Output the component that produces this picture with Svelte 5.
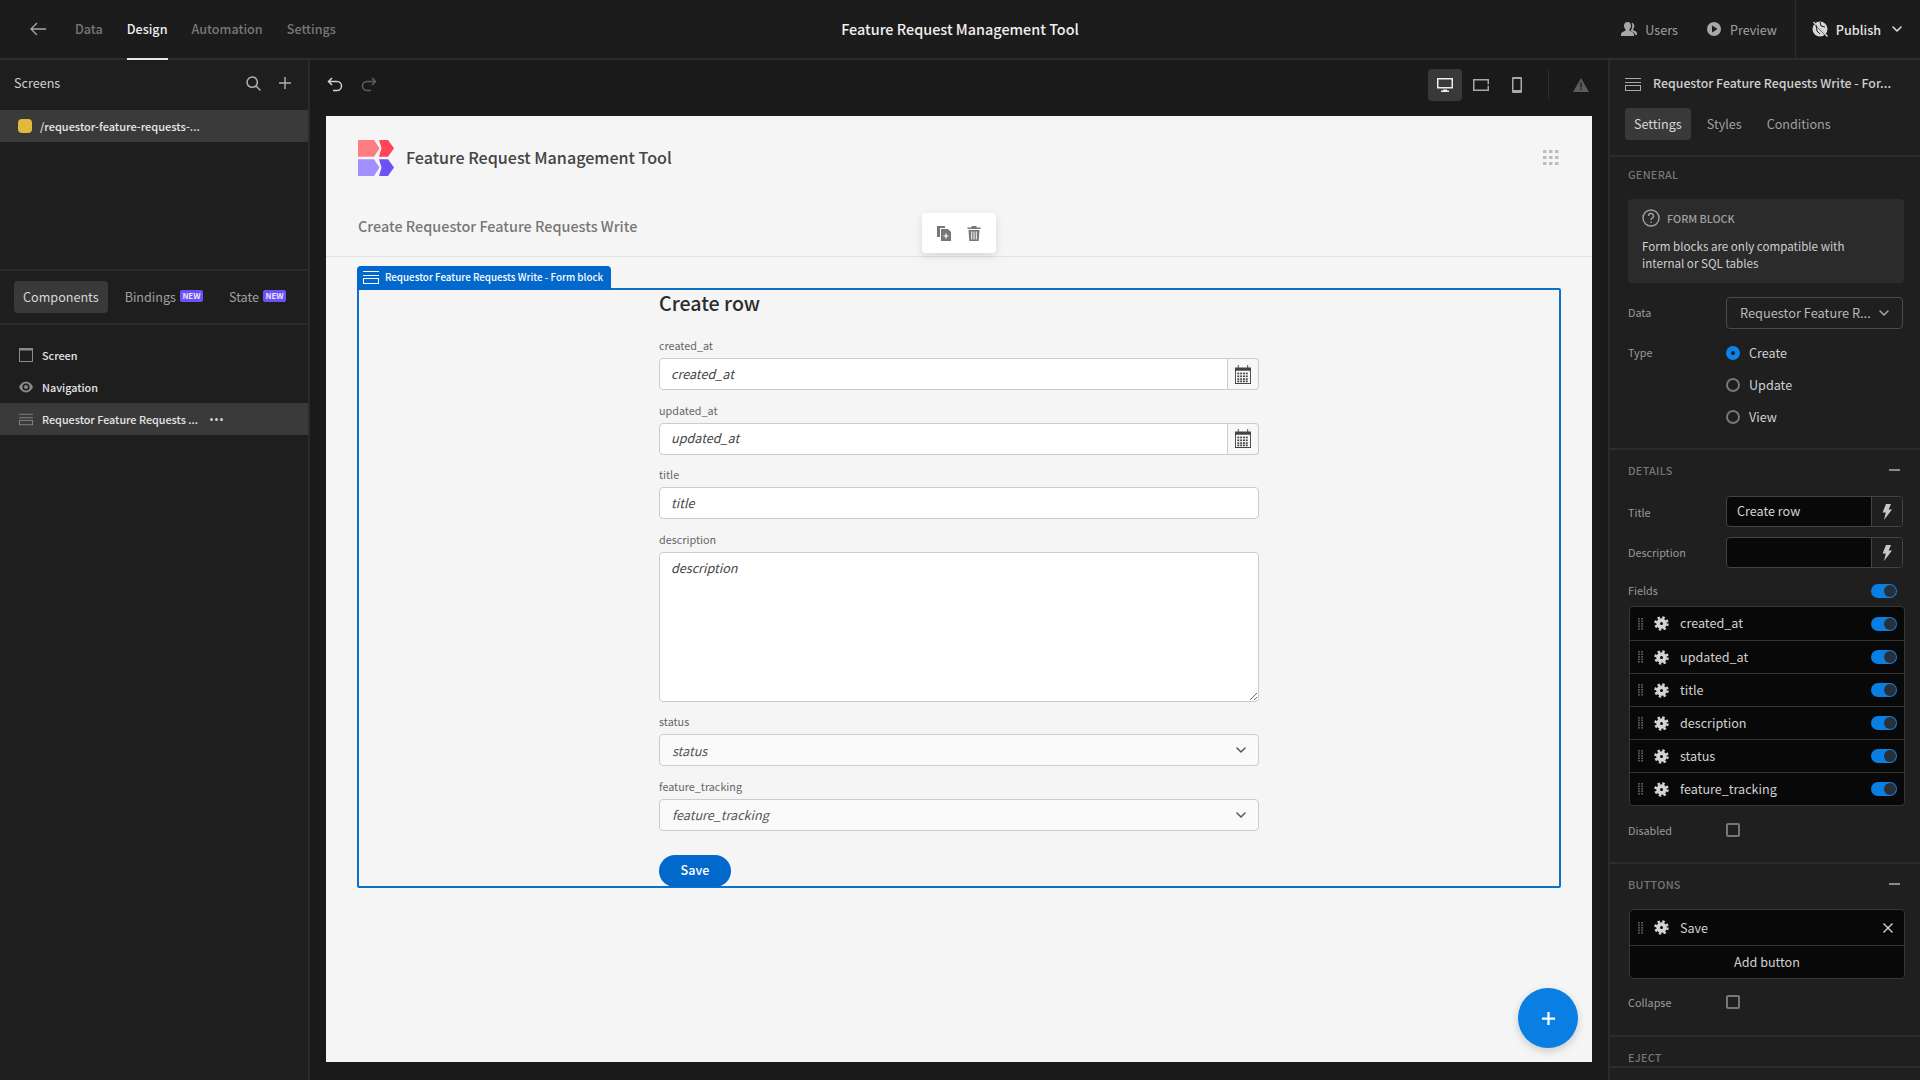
<script>
  const navItems = ['Data', 'Design', 'Automation', 'Settings'];
  const fields = ['created_at', 'updated_at', 'title', 'description', 'status', 'feature_tracking'];
</script>

{#snippet formIcon()}
  <svg class="form-icon" viewBox="0 0 16 13" fill="none" stroke="currentColor" stroke-width="1">
    <path d="M0 .5h16M0 4.5h16" />
    <rect x=".5" y="7.5" width="15" height="5" />
  </svg>
{/snippet}

{#snippet gear()}
  <svg class="gear" viewBox="0 0 16 16">
    <circle cx="8" cy="8" r="5.6" fill="#d4d4d4" />
    <circle cx="8" cy="8" r="6.4" fill="none" stroke="#d4d4d4" stroke-width="2.6" stroke-dasharray="2.6 2.43" />
    <circle cx="8" cy="8" r="1.6" fill="#0a0a0a" />
  </svg>
{/snippet}

{#snippet grip()}
  <svg class="grip" viewBox="0 0 5 12" fill="#5c5c5c">
    {#each [0, 2.5, 5, 7.5, 10] as y}
      <rect x="0" {y} width="1.8" height="1.6" />
      <rect x="3.2" {y} width="1.8" height="1.6" />
    {/each}
  </svg>
{/snippet}

{#snippet chevron()}
  <svg class="chevron" viewBox="0 0 10 6" fill="none" stroke="currentColor" stroke-width="1.5" stroke-linecap="round" stroke-linejoin="round">
    <path d="M1 1l4 4 4-4" />
  </svg>
{/snippet}

{#snippet bolt()}
  <svg class="bolt" viewBox="0 0 10 16" fill="#c8c8c8">
    <path d="M4 0h5L6.6 5.5H10L2 16l1.8-7.6H.6z" />
  </svg>
{/snippet}

{#snippet calendar()}
  <svg class="cal" viewBox="0 0 17 20" fill="#444">
    <path d="M0 2.5h3V0h1v2.5h9V0h1v2.5h3V20H0zM1 6v13h15V6z" />
    {#each [8, 11, 14, 16.4] as y}
      {#each [2.5, 5.5, 8.5, 11.5] as x}
        <rect {x} {y} width="2" height="1.8" />
      {/each}
    {/each}
  </svg>
{/snippet}

<div class="app">
  <header class="topbar">
    <button class="back" aria-label="Back">
      <svg viewBox="0 0 16 14" fill="none" stroke="currentColor" stroke-width="1.3">
        <path d="M16 7H1M7 1L1 7l6 6" />
      </svg>
    </button>
    <nav class="main-nav">
      {#each navItems as item}
        <span class="nav-item" class:active={item === 'Design'}>{item}</span>
      {/each}
    </nav>
    <div class="app-name">Feature Request Management Tool</div>
    <div class="top-actions">
      <span class="top-link users">
        <svg viewBox="0 0 16 14" fill="#a8a8a8">
          <path d="M6.5 0C8.6 0 10 1.6 10 3.8c0 1.5-.6 2.7-1.5 3.5v1.2c0 .5 4.5 1.4 4.5 4V14H0v-1.5c0-2.6 4.5-3.5 4.5-4V7.3C3.600 6.500 3 5.300 3 3.800 3 1.600 4.400 0 6.500 0z" />
          <path d="M10.500.6c1.700.3 2.800 1.700 2.800 3.400 0 1.200-.4 2.200-1.200 3v1c.6.4 3.900 1.200 3.900 3.500V13h-1.700c-.3-2.400-2.600-3.300-4.400-4.100V7.800c.9-.9 1.400-2.300 1.400-3.900 0-1.200-.3-2.400-.8-3.300z" />
        </svg>
        Users
      </span>
      <span class="top-link preview">
        <svg viewBox="0 0 14 14">
          <circle cx="7" cy="7" r="7" fill="#a8a8a8" />
          <path d="M5 3.600L10.500 7 5 10.400z" fill="#1c1c1c" />
        </svg>
        Preview
      </span>
      <div class="publish">
        <svg viewBox="0 0 16 16" fill="#d8d8d8">
          <circle cx="8" cy="8" r="7.5" />
          <path d="M1 0l15 15.500-1 1L0 1z" fill="#1c1c1c" />
          <path d="M2 .5l14 14.500-1 1L1 1.500z" />
          <path d="M4 4l1 6 3 3M8 1l1 4 4 1" fill="none" stroke="#1c1c1c" />
        </svg>
        <span>Publish</span>
        {@render chevron()}
      </div>
    </div>
  </header>

  <div class="workspace">
    <aside class="left-panel">
      <div class="screens-head">
        <span class="nudge">Screens</span>
        <div class="head-icons">
          <svg viewBox="0 0 14 14" fill="none" stroke="currentColor" stroke-width="1.4">
            <circle cx="5.8" cy="5.8" r="4.8" />
            <path d="M9.300 9.300l4.200 4.200" />
          </svg>
          <svg viewBox="0 0 12 12" fill="none" stroke="currentColor" stroke-width="1.4">
            <path d="M6 0v12M0 6h12" />
          </svg>
        </div>
      </div>
      <div class="screen-row">
        <span class="swatch"></span>
        <span>/requestor-feature-requests-...</span>
      </div>

      <div class="left-lower">
        <div class="left-tabs">
          <span class="tab selected">Components</span>
          <span class="tab">Bindings <em class="new">NEW</em></span>
          <span class="tab">State <em class="new">NEW</em></span>
        </div>
        <ul class="tree">
          <li>
            <svg class="tree-icon" viewBox="0 0 14 14" fill="none" stroke="#8a8a8a">
              <rect x=".5" y=".5" width="13" height="13" />
              <path d="M0 1.500h14" stroke-width="2" />
            </svg>
            Screen
          </li>
          <li>
            <svg class="tree-icon" viewBox="0 0 14 12">
              <path d="M0 6c1.500-3.400 4-5.500 7-5.500S12.500 2.600 14 6c-1.500 3.400-4 5.500-7 5.500S1.500 9.400 0 6z" fill="#8a8a8a" />
              <circle cx="7" cy="6" r="3.600" fill="#1e1e1e" />
              <circle cx="7" cy="6" r="2" fill="#8a8a8a" />
            </svg>
            Navigation
          </li>
          <li class="selected">
            <span class="tree-form">{@render formIcon()}</span>
            Requestor Feature Requests ...
            <span class="more"><i></i><i></i><i></i></span>
          </li>
        </ul>
      </div>
    </aside>

    <main class="center">
      <div class="toolbar">
        <div class="history">
          <svg viewBox="0 0 16 16" fill="none" stroke="#d0d0d0" stroke-width="1.5">
            <path d="M5 1L1.500 4.500 5 8M2 4.500h8a4.500 4.500 0 0 1 0 9H6" />
          </svg>
          <svg viewBox="0 0 16 16" fill="none" stroke="#5e5e5e" stroke-width="1.5">
            <path d="M11 1l3.500 3.500L11 8M14 4.500H6a4.500 4.500 0 0 0 0 9h4" />
          </svg>
        </div>
        <div class="devices">
          <span class="device on">
            <svg viewBox="0 0 16 14" fill="#eee">
              <path d="M0 0h16v10.500H0zM1.500 1.500V9h13V1.500zM6 11.500h4v1h2V14H4v-1.500h2z" />
            </svg>
          </span>
          <span class="device">
            <svg viewBox="0 0 16 12" fill="#a8a8a8">
              <path d="M0 0h16v12H0zM1.500 1.500v9h13v-9z" />
              <circle cx="15" cy="6" r="1" fill="#1a1a1a" />
            </svg>
          </span>
          <span class="device">
            <svg class="phone" viewBox="0 0 10 16" fill="#a8a8a8">
              <path d="M1 0h8a1 1 0 0 1 1 1v14a1 1 0 0 1-1 1H1a1 1 0 0 1-1-1V1a1 1 0 0 1 1-1zM1.500 2v11h7V2z" />
            </svg>
          </span>
          <span class="tool-sep"></span>
          <svg class="warn" viewBox="0 0 16 14">
            <path d="M8 0l8 14H0z" fill="#5c5c5c" />
            <path d="M7.300 4.500h1.400v5H7.300zM7.300 10.500h1.400v1.400H7.300z" fill="#1a1a1a" />
          </svg>
        </div>
      </div>

      <div class="canvas">
        <div class="site-nav">
          <div class="brand">
            <svg class="logo" viewBox="0 0 36 36">
              <path d="M0 0h16l5.500 8.300-5.500 8.400H0z" fill="#ff7c80" />
              <path d="M21 0h9l6 8.300-6 8.400h-9l2.500-8.400z" fill="#ff4557" />
              <path d="M0 19.300h16l5.500 8.300-5.500 8.400H0z" fill="#a48fff" />
              <path d="M21 19.300h9l6 8.300-6 8.400h-9l2.500-8.400z" fill="#6a52f5" />
            </svg>
            <span class="nudge">Feature Request Management Tool</span>
          </div>
          <svg class="dots" viewBox="0 0 16 15" fill="#bdbdbd">
            {#each [0, 6, 12] as y}
              {#each [0, 6, 12] as x}
                <rect {x} {y} width="3.5" height="3" />
              {/each}
            {/each}
          </svg>
        </div>
        <h2 class="screen-title">Create Requestor Feature Requests Write</h2>

        <div class="float-tools">
          <svg viewBox="0 0 14 15" fill="#777">
            <path d="M0 0h8v2H3v9H0z" />
            <path d="M4 3h7l3 3v9H4z" />
            <path d="M9 7.500v5M6.500 10h5" stroke="#fff" stroke-width="1.2" />
          </svg>
          <svg viewBox="0 0 13 15" fill="#777">
            <path d="M0 1.500h4V0h5v1.500h4V3H0z" />
            <path d="M1 4h11l-.8 11H1.800zM3.700 5.500v8h1v-8zM6 5.500v8h1v-8zM8.300 5.500v8h1v-8z" fill-rule="evenodd" />
          </svg>
        </div>

        <section class="block">
          <div class="block-tag">
            {@render formIcon()}
            <span>Requestor Feature Requests Write - Form block</span>
          </div>
          <form class="form" on:submit|preventDefault>
            <h3>Create row</h3>
            <div class="field">
              <label for="created">created_at</label>
              <div class="date-input">
                <input id="created" placeholder="created_at" />
                <span class="cal-btn">{@render calendar()}</span>
              </div>
            </div>
            <div class="field">
              <label for="updated">updated_at</label>
              <div class="date-input">
                <input id="updated" placeholder="updated_at" />
                <span class="cal-btn">{@render calendar()}</span>
              </div>
            </div>
            <div class="field">
              <label for="title">title</label>
              <input id="title" class="plain" placeholder="title" />
            </div>
            <div class="field">
              <label for="desc">description</label>
              <textarea id="desc" placeholder="description"></textarea>
            </div>
            <div class="field">
              <span class="label">status</span>
              <div class="picker"><i>status</i>{@render chevron()}</div>
            </div>
            <div class="field">
              <span class="label">feature_tracking</span>
              <div class="picker"><i>feature_tracking</i>{@render chevron()}</div>
            </div>
            <button class="save" type="button">Save</button>
          </form>
        </section>

        <button class="fab" aria-label="Add component">
          <svg viewBox="0 0 16 16" fill="none" stroke="#fff" stroke-width="2.4">
            <path d="M8 1v14M1 8h14" />
          </svg>
        </button>
      </div>
    </main>

    <aside class="right-panel">
      <div class="settings-head">
        <div class="settings-title">
          {@render formIcon()}
          <span class="nudge">Requestor Feature Requests Write - For...</span>
        </div>
        <div class="settings-tabs">
          <span class="tab selected">Settings</span>
          <span class="tab">Styles</span>
          <span class="tab">Conditions</span>
        </div>
      </div>

      <section class="group general">
        <h4>GENERAL</h4>
        <div class="info">
          <div class="info-head">
            <svg viewBox="0 0 18 18" fill="none" stroke="#a0a0a0" stroke-width="1.4">
              <circle cx="9" cy="9" r="8" />
              <path d="M6.500 7a2.500 2.500 0 1 1 3.600 2.200c-.8.4-1.100.9-1.100 1.800" />
              <path d="M9 12.500v1.500" />
            </svg>
            FORM BLOCK
          </div>
          <p>Form blocks are only compatible with internal or SQL tables</p>
        </div>
        <div class="prop data-row">
          <span class="prop-label nudge">Data</span>
          <div class="data-select"><span class="nudge">Requestor Feature R...</span>{@render chevron()}</div>
        </div>
        <div class="prop type-row">
          <span class="prop-label">Type</span>
          <div class="radios">
            <span class="radio on"><span class="nudge">Create</span></span>
            <span class="radio"><span class="nudge">Update</span></span>
            <span class="radio"><span class="nudge">View</span></span>
          </div>
        </div>
      </section>

      <section class="group details">
        <h4>DETAILS <b class="minus"></b></h4>
        <div class="prop title-row">
          <span class="prop-label">Title</span>
          <div class="bound"><span>Create row</span><em>{@render bolt()}</em></div>
        </div>
        <div class="prop desc-row">
          <span class="prop-label nudge">Description</span>
          <div class="bound"><span></span><em>{@render bolt()}</em></div>
        </div>
        <div class="prop fields-row">
          <span class="prop-label nudge">Fields</span>
          <span class="toggle"></span>
        </div>
        <ul class="list">
          {#each fields as field}
            <li>
              {@render grip()}
              {@render gear()}
              <span class="nudge">{field}</span>
              <span class="toggle"></span>
            </li>
          {/each}
        </ul>
        <div class="prop check-row">
          <span class="prop-label">Disabled</span>
          <span class="check"></span>
        </div>
      </section>

      <section class="group buttons">
        <h4>BUTTONS <b class="minus"></b></h4>
        <ul class="list">
          <li class="tall">
            {@render grip()}
            {@render gear()}
            <span>Save</span>
            <svg class="close" viewBox="0 0 10 10" fill="none" stroke="#d4d4d4" stroke-width="1.4">
              <path d="M.5.5l9 9M9.500.5l-9 9" />
            </svg>
          </li>
          <li class="add"><span class="nudge">Add button</span></li>
        </ul>
        <div class="prop check-row collapse">
          <span class="prop-label">Collapse</span>
          <span class="check"></span>
        </div>
      </section>

      <section class="group eject">
        <h4>EJECT</h4>
      </section>
    </aside>
  </div>
</div>

<style>
  :global(body) {
    margin: 0;
    background: #1a1a1a;
    overflow: hidden;
  }

  .app {
    width: 1920px;
    height: 1080px;
    display: flex;
    flex-direction: column;
    overflow: hidden;
    font-family: 'Noto Sans CJK SC', 'Noto Sans', sans-serif;
    color: #d0d0d0;
    font-size: 12.6px;
  }

  /* this font sits a pixel low in centered rows */
  .nudge {
    margin-bottom: 2px;
  }

  /* top bar */
  .topbar {
    position: relative;
    height: 58px;
    flex: none;
    display: flex;
    align-items: center;
    background: #1c1c1c;
    border-bottom: 2px solid #2c2c2c;
  }

  .back {
    width: 16px;
    height: 14px;
    margin-left: 30px;
    padding: 0;
    border: 0;
    background: none;
    color: #a8a8a8;
  }

  .back svg {
    display: block;
  }

  .main-nav {
    display: flex;
    gap: 24px;
    margin-left: 29px;
    height: 100%;
  }

  .nav-item {
    position: relative;
    line-height: 58px;
    font-weight: 500;
    color: #777;
  }

  .nav-item.active {
    color: #eee;
  }

  .nav-item.active::after {
    content: '';
    position: absolute;
    left: 0;
    right: 0;
    bottom: -2px;
    height: 2px;
    background: #e8e8e8;
  }

  .app-name {
    position: absolute;
    left: 0;
    right: 0;
    padding-bottom: 2px;
    text-align: center;
    font-size: 14.4px;
    font-weight: 500;
    color: #f0f0f0;
    pointer-events: none;
  }

  .top-actions {
    margin-left: auto;
    height: 100%;
    display: flex;
    align-items: center;
  }

  .top-link {
    display: flex;
    align-items: center;
    color: #a0a0a0;
  }

  .users svg {
    width: 16px;
    height: 14px;
    margin-right: 8px;
  }

  .preview {
    margin-left: 29px;
  }

  .preview svg {
    width: 14px;
    height: 14px;
    margin-right: 9px;
  }

  .publish {
    height: 100%;
    margin-left: 18px;
    padding: 0 18px 0 16px;
    display: flex;
    align-items: center;
    border-left: 1px solid #2c2c2c;
    color: #e4e4e4;
    font-weight: 500;
  }

  .publish svg:first-child {
    width: 16px;
    height: 16px;
    margin-right: 8px;
  }

  .publish :global(.chevron) {
    margin-left: 11px;
  }

  .chevron {
    width: 10px;
    height: 6px;
    flex: none;
  }

  /* layout */
  .workspace {
    flex: 1;
    min-height: 0;
    display: flex;
  }

  .left-panel {
    width: 308px;
    flex: none;
    display: flex;
    flex-direction: column;
    background: #1e1e1e;
    border-right: 2px solid #2a2a2a;
  }

  .screens-head {
    box-sizing: border-box;
    height: 50px;
    padding: 0 17px 4px 14px;
    display: flex;
    align-items: center;
    justify-content: space-between;
    color: #cfcfcf;
  }

  .head-icons {
    display: flex;
    align-items: center;
    gap: 18px;
    color: #b0b0b0;
  }

  .head-icons svg:first-child {
    width: 15px;
    height: 15px;
  }

  .head-icons svg:last-child {
    width: 12px;
    height: 12px;
  }

  .screen-row {
    height: 32px;
    padding-left: 18px;
    display: flex;
    align-items: center;
    gap: 8px;
    background: #3a3a3a;
    color: #e8e8e8;
    font-size: 11px;
    font-weight: 500;
  }

  .swatch {
    width: 14px;
    height: 14px;
    border-radius: 4px;
    background: #e0b93d;
  }

  .left-lower {
    margin-top: 127px;
    border-top: 2px solid #2a2a2a;
  }

  .left-tabs {
    height: 52px;
    padding: 0 14px;
    display: flex;
    align-items: center;
    gap: 8px;
    border-bottom: 2px solid #2a2a2a;
  }

  .tab {
    box-sizing: border-box;
    display: inline-flex;
    align-items: center;
    height: 32px;
    padding: 0 9px 2px;
    color: #a0a0a0;
    white-space: nowrap;
  }

  .tab.selected {
    border-radius: 4px;
    background: #393939;
    color: #d8d8d8;
  }

  .new {
    margin-left: 4px;
    width: 23px;
    height: 12px;
    border-radius: 2px;
    background: #6a52f5;
    color: #e8e4ff;
    font-size: 8px;
    font-style: normal;
    font-weight: 700;
    line-height: 12px;
    text-align: center;
  }

  .tree {
    list-style: none;
    margin: 0;
    padding: 14px 0 0;
  }

  .tree li {
    height: 32px;
    padding-left: 19px;
    display: flex;
    align-items: center;
    color: #e4e4e4;
    font-size: 10.8px;
    font-weight: 500;
  }

  .tree li.selected {
    background: #3a3a3a;
  }

  .tree-icon {
    width: 14px;
    height: 14px;
    margin-right: 9px;
    flex: none;
  }

  .tree-form {
    display: flex;
    margin-right: 9px;
    color: #8a8a8a;
  }

  .tree-form :global(.form-icon) {
    width: 14px;
    height: 13px;
  }

  .more {
    display: flex;
    gap: 2px;
    margin-left: 12px;
  }

  .more i {
    width: 3px;
    height: 3px;
    border-radius: 50%;
    background: #d0d0d0;
  }

  /* center */
  .center {
    flex: 1;
    min-width: 0;
    display: flex;
    flex-direction: column;
    background: #1a1a1a;
    padding: 0 16px 18px;
  }

  .toolbar {
    box-sizing: border-box;
    height: 56px;
    padding-bottom: 6px;
    flex: none;
    display: flex;
    align-items: center;
    justify-content: space-between;
  }

  .history {
    display: flex;
    gap: 18px;
    padding-left: 1px;
  }

  .history svg {
    width: 16px;
    height: 16px;
  }

  .devices {
    display: flex;
    align-items: center;
    margin-right: 3px;
  }

  .device {
    width: 34px;
    height: 32px;
    margin-right: 2px;
    border-radius: 4px;
    display: flex;
    align-items: center;
    justify-content: center;
  }

  .device.on {
    background: #393939;
  }

  .device svg {
    width: 16px;
    height: 14px;
  }

  .device svg.phone {
    width: 10px;
    height: 16px;
  }

  .tool-sep {
    width: 1px;
    height: 30px;
    margin: 0 24px 0 12px;
    background: #2c2c2c;
  }

  .warn {
    width: 16px;
    height: 14px;
  }

  .canvas {
    position: relative;
    flex: 1;
    min-height: 0;
    background: #f5f5f5;
    color: #444;
  }

  .site-nav {
    padding: 24px 33px 0 32px;
    display: flex;
    align-items: center;
    justify-content: space-between;
  }

  .brand {
    display: flex;
    align-items: center;
    gap: 12px;
    font-size: 16.1px;
    font-weight: 500;
    color: #444;
  }

  .logo {
    width: 36px;
    height: 36px;
  }

  .dots {
    width: 16px;
    height: 15px;
    margin-bottom: 2px;
  }

  .screen-title {
    margin: 0;
    padding: 37px 32px 0;
    height: 43px;
    line-height: 26px;
    font-size: 14.4px;
    font-weight: 500;
    color: #777;
    border-bottom: 1px solid #e2e2e2;
  }

  .float-tools {
    position: absolute;
    left: 596px;
    top: 97px;
    width: 74px;
    height: 40px;
    border-radius: 4px;
    background: #fff;
    box-shadow: 0 3px 9px rgba(0, 0, 0, 0.12);
    display: flex;
    align-items: center;
    justify-content: center;
    gap: 16px;
  }

  .float-tools svg {
    width: 14px;
    height: 15px;
  }

  .block {
    position: relative;
    margin: 31px 31px 0 31px;
    border: 2px solid #0f6fc6;
    border-radius: 2px;
  }

  .block-tag {
    position: absolute;
    left: -2px;
    top: -24px;
    height: 24px;
    width: 254px;
    box-sizing: border-box;
    padding: 0 0 2px 6px;
    display: flex;
    align-items: center;
    gap: 6px;
    border-radius: 4px 4px 0 0;
    background: #0268cc;
    color: #fff;
    font-size: 9.8px;
    font-weight: 500;
    white-space: nowrap;
  }

  .form-icon {
    width: 16px;
    height: 13px;
    flex: none;
  }

  .form {
    width: 600px;
    margin: 0 auto;
    display: flex;
    flex-direction: column;
    gap: 12.5px;
  }

  .form h3 {
    margin: -1px 0 8.5px;
    font-size: 19.6px;
    line-height: 28px;
    font-weight: 500;
    color: #2b2b2b;
  }

  .field {
    display: flex;
    flex-direction: column;
    gap: 4px;
  }

  .field label,
  .label {
    margin: -1px 0 1px;
    font-size: 10.8px;
    line-height: 16px;
    color: #666;
  }

  .form input,
  .form textarea {
    box-sizing: border-box;
    display: block;
    width: 100%;
    padding: 0 11px 2px;
    border: 1px solid #ccc;
    border-radius: 4px;
    background: #fff;
    font: italic 12.6px 'Noto Sans CJK SC', 'Noto Sans', sans-serif;
    color: #444;
    outline: none;
  }

  .form input::placeholder,
  .form textarea::placeholder {
    color: #444;
    opacity: 1;
  }

  .plain {
    height: 32px;
  }

  .date-input {
    display: flex;
  }

  .date-input input {
    flex: 1;
    height: 32px;
    border-radius: 4px 0 0 4px;
  }

  .cal-btn {
    width: 31px;
    height: 32px;
    box-sizing: border-box;
    flex: none;
    display: flex;
    align-items: center;
    justify-content: center;
    border: 1px solid #ccc;
    border-left: 0;
    border-radius: 0 4px 4px 0;
    background: #f8f8f8;
  }

  .cal {
    width: 16px;
    height: 19px;
  }

  .form textarea {
    height: 150px;
    padding-top: 6px;
    line-height: 18px;
  }

  .picker {
    box-sizing: border-box;
    height: 32px;
    padding: 0 12px;
    display: flex;
    align-items: center;
    justify-content: space-between;
    border: 1px solid #ccc;
    border-radius: 4px;
    background: #fafafa;
    color: #555;
  }

  .picker :global(.chevron) {
    color: #555;
  }

  .save {
    width: 72px;
    height: 32px;
    margin: 11.5px 0 -1px;
    padding: 0 0 2px;
    border: 0;
    border-radius: 16px;
    background: #0268cc;
    color: #fff;
    font: 500 12.6px 'Noto Sans CJK SC', 'Noto Sans', sans-serif;
  }

  .fab {
    position: absolute;
    right: 14px;
    bottom: 14px;
    width: 60px;
    height: 60px;
    padding: 0;
    border: 0;
    border-radius: 50%;
    background: #0a7fe3;
    box-shadow: 0 3px 8px rgba(0, 0, 0, 0.18);
    display: flex;
    align-items: center;
    justify-content: center;
  }

  .fab svg {
    width: 15px;
    height: 15px;
  }

  /* right panel */
  .right-panel {
    width: 310px;
    flex: none;
    overflow: hidden;
    background: #1f1f1f;
    border-left: 2px solid #2a2a2a;
  }

  .settings-head {
    height: 95px;
    padding-left: 15px;
    border-bottom: 2px solid #2c2c2c;
  }

  .settings-title {
    height: 48px;
    display: flex;
    align-items: center;
    gap: 12px;
    color: #cfcfcf;
    font-size: 12.35px;
    font-weight: 500;
    white-space: nowrap;
  }

  .settings-title :global(.form-icon) {
    color: #a8a8a8;
  }

  .settings-tabs {
    display: flex;
    gap: 7px;
  }

  .group {
    padding: 0 16px 0 18px;
    border-bottom: 2px solid #2c2c2c;
  }

  .group h4 {
    margin: 0;
    padding-top: 11px;
    display: flex;
    justify-content: space-between;
    align-items: center;
    font-size: 10.8px;
    line-height: 18px;
    font-weight: 500;
    letter-spacing: 0.3px;
    color: #777;
  }

  .minus {
    width: 11px;
    height: 2px;
    margin-right: 4px;
    background: #8a8a8a;
  }

  .general {
    height: 293px;
    box-sizing: border-box;
  }

  .general h4 {
    padding-top: 8px;
  }

  .info {
    box-sizing: border-box;
    height: 84px;
    margin-top: 16px;
    padding: 10px 40px 10px 14px;
    border-radius: 4px;
    background: #2b2b2b;
    color: #cfcfcf;
    font-size: 11.6px;
  }

  .info-head {
    display: flex;
    align-items: center;
    gap: 7px;
    height: 18px;
    font-size: 10.8px;
    font-weight: 500;
    color: #a0a0a0;
  }

  .info-head svg {
    width: 18px;
    height: 18px;
  }

  .info p {
    margin: 11px 0 0;
    line-height: 17px;
  }

  .prop {
    display: flex;
    align-items: center;
  }

  .prop-label {
    width: 98px;
    flex: none;
    font-size: 10.8px;
    color: #999;
  }

  .data-row {
    margin-top: 14px;
  }

  .data-select {
    box-sizing: border-box;
    width: 177px;
    height: 32px;
    padding: 0 13px;
    display: flex;
    align-items: center;
    justify-content: space-between;
    border: 1px solid #4a4a4a;
    border-radius: 4px;
    color: #b8b8b8;
    font-size: 12.8px;
  }

  .data-select :global(.chevron) {
    color: #a8a8a8;
  }

  .type-row {
    align-items: flex-start;
    margin-top: 8px;
  }

  .type-row .prop-label {
    line-height: 30px;
  }

  .radios {
    display: flex;
    flex-direction: column;
  }

  .radio {
    height: 32px;
    display: flex;
    align-items: center;
    gap: 9px;
    color: #d0d0d0;
  }

  .radio::before {
    content: '';
    box-sizing: border-box;
    width: 14px;
    height: 14px;
    border: 2px solid #777;
    border-radius: 50%;
  }

  .radio.on::before {
    border: 5px solid #0a84e8;
    background: #1f1f1f;
  }

  .details {
    height: 414px;
    box-sizing: border-box;
  }

  .title-row {
    margin-top: 17px;
  }

  .desc-row {
    margin-top: 10px;
  }

  .bound {
    box-sizing: border-box;
    width: 177px;
    height: 31px;
    display: flex;
    border: 1px solid #444;
    border-radius: 4px;
    background: #080808;
    color: #d4d4d4;
  }

  .bound span {
    flex: 1;
    padding-left: 10px;
    line-height: 28px;
  }

  .bound em {
    width: 30px;
    display: flex;
    align-items: center;
    justify-content: center;
    border-left: 1px solid #444;
    background: #1f1f1f;
    border-radius: 0 4px 4px 0;
  }

  .bolt {
    width: 10px;
    height: 16px;
  }

  .fields-row {
    margin-top: 14px;
    height: 18px;
    justify-content: space-between;
  }

  .toggle {
    position: relative;
    width: 26px;
    height: 14px;
    margin-right: 7px;
    border-radius: 7px;
    background: #0a7fe3;
    flex: none;
  }

  .toggle::after {
    content: '';
    position: absolute;
    right: 1px;
    top: 1px;
    width: 12px;
    height: 12px;
    border-radius: 50%;
    background: #2a2f36;
  }

  .list {
    list-style: none;
    margin: 6px -1px 0 1px;
    padding: 0;
    border: 1px solid #363636;
    border-radius: 4px;
    background: #080808;
  }

  .list li {
    box-sizing: border-box;
    height: 33px;
    padding: 0 0 0 8px;
    display: flex;
    align-items: center;
    color: #d0d0d0;
    border-top: 1px solid #363636;
  }

  .list li:first-child {
    border-top: 0;
  }

  .list .toggle {
    margin-left: auto;
    margin-right: 7px;
  }

  .grip {
    width: 5px;
    height: 12px;
    flex: none;
  }

  .gear {
    width: 15px;
    height: 15px;
    margin: 0 11px 0 11px;
    flex: none;
  }

  .list li.tall {
    height: 35px;
  }

  .close {
    width: 10px;
    height: 10px;
    margin-left: auto;
    margin-right: 11px;
  }

  .list li.add {
    padding: 0;
    justify-content: center;
    height: 33px;
  }

  .check-row {
    margin-top: 14px;
    height: 20px;
  }

  .check {
    box-sizing: border-box;
    width: 14px;
    height: 14px;
    border: 2px solid #777;
    border-radius: 2px;
  }

  .buttons {
    height: 173px;
    box-sizing: border-box;
  }

  .buttons .list {
    margin-top: 16px;
  }

  .collapse {
    margin-top: 13px;
  }
</style>
